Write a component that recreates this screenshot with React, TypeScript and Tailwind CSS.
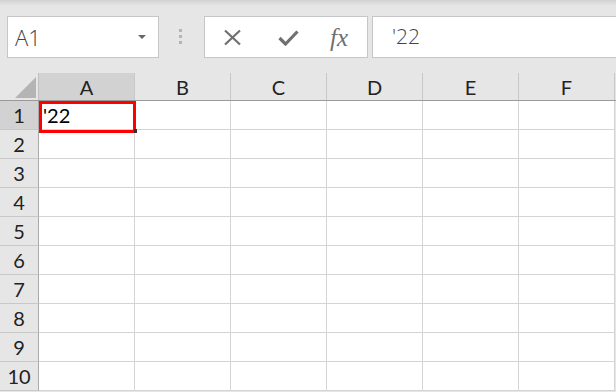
import React from "react";

const cols = ["A", "B", "C", "D", "E", "F"];
const rows = [1, 2, 3, 4, 5, 6, 7, 8, 9, 10];

export default function App() {
  return (
    <div
      className="relative w-[616px] h-[392px] overflow-hidden bg-[#e6e6e6] flex flex-col"
      style={{ fontFamily: "Lato, 'Open Sans', sans-serif" }}
    >
      <div className="h-[5px] bg-gradient-to-b from-[#d2d2d2] to-[#e3e3e3]" />
      {/* toolbar */}
      <div className="h-[68px] flex items-start pt-[11px]">
        <div className="ml-[7px] w-[152px] h-[42px] bg-white border border-[#c6c6c6] flex items-center pl-[7px] pr-[12px]">
          <span
            className="text-[22px] text-[#444] flex-1"
            style={{ fontFamily: "'Open Sans', sans-serif", fontWeight: 300 }}
          >
            A1
          </span>
          <svg width="8" height="5" viewBox="0 0 8 5">
            <path d="M0 0 L8 0 L4 4 Z" fill="#666" />
          </svg>
        </div>
        <div className="ml-[20px] mt-[13px] flex flex-col gap-[3px]">
          <div className="w-[3px] h-[3px] bg-[#b4b4b4]" />
          <div className="w-[3px] h-[3px] bg-[#b4b4b4]" />
          <div className="w-[3px] h-[3px] bg-[#b4b4b4]" />
        </div>
        <div className="ml-[22px] w-[164px] h-[42px] bg-white border border-[#c6c6c6] flex items-center">
          <svg className="ml-[18px]" width="19" height="17" viewBox="0 0 19 17">
            <path d="M2 1.5 L17 15.5 M17 1.5 L2 15.5" stroke="#707070" strokeWidth="2.2" />
          </svg>
          <svg className="ml-[36px]" width="21" height="17" viewBox="0 0 21 17">
            <path d="M1.5 9 L7.5 15 L19.5 2.5" stroke="#707070" strokeWidth="3.2" fill="none" />
          </svg>
          <span
            className="ml-[31px] text-[25px] italic text-[#707070] leading-none"
            style={{ fontFamily: "'Liberation Serif', serif" }}
          >
            fx
          </span>
        </div>
        <div className="ml-[4px] flex-1 h-[42px] bg-white border border-[#c6c6c6] border-r-0 flex items-center pl-[19px]">
          <span
            className="text-[21px] text-[#444]"
            style={{ fontFamily: "'Open Sans', sans-serif", fontWeight: 300 }}
          >
            '22
          </span>
        </div>
      </div>
      {/* grid */}
      <div className="relative flex flex-col">
        <div className="flex h-[28px] border-b-[1.5px] border-[#9a9a9a]">
          <div className="relative w-[39px] h-full border-r border-[#c0c0c0]">
            <svg className="absolute right-[2px] bottom-[2px]" width="21" height="21" viewBox="0 0 21 21">
              <path d="M21 0 L21 21 L0 21 Z" fill="#b4b4b4" />
            </svg>
          </div>
          {cols.map((c) => (
            <div
              key={c}
              className={`w-[96px] h-full flex items-center justify-center text-[20px] text-[#222] border-r border-[#c8c8c8] ${
                c === "A" ? "bg-[#d2d2d2]" : ""
              }`}
            >
              {c}
            </div>
          ))}
        </div>
        {rows.map((r) => (
          <div key={r} className="flex h-[29px]">
            <div
              className={`w-[39px] h-full flex items-center justify-center text-[20px] text-[#222] border-r border-b border-[#aaaaaa] border-b-[#c8c8c8] ${
                r === 1 ? "bg-[#d2d2d2]" : "bg-[#e6e6e6]"
              }`}
            >
              {r}
            </div>
            {cols.map((c) => (
              <div
                key={c}
                className="w-[96px] h-full bg-white border-r border-b border-[#d4d4d4] flex items-center pl-[4px] text-[20px] text-black"
                style={{ fontFamily: "Lato, sans-serif" }}
              >
                {r === 1 && c === "A" ? "'22" : ""}
              </div>
            ))}
          </div>
        ))}
        <div className="absolute left-[39px] top-[28px] w-[97px] h-[32px] border-[3px] border-[#ff0000]" />
        <div className="absolute left-[134px] top-[56px] w-[3px] h-[4px] bg-[#333]" />
      </div>
    </div>
  );
}
